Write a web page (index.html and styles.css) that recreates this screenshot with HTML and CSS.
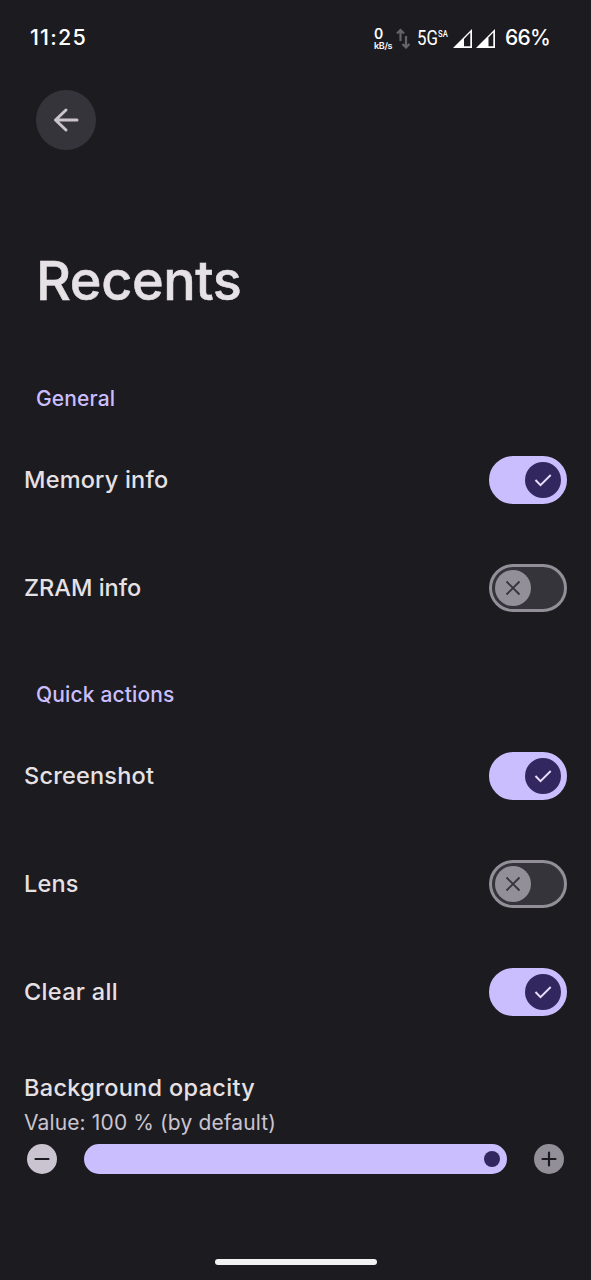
FILE: index.html
```html
<!DOCTYPE html>
<html lang="en">
<head>
<meta charset="utf-8">
<title>Recents</title>
<link rel="stylesheet" href="styles.css">
</head>
<body>
<svg class="defs" width="0" height="0">
  <symbol id="check" viewBox="0 0 36 36"><path d="M10.500 18l5 5.200L25.700 13" fill="none" stroke="#e9e0ff" stroke-width="1.900"/></symbol>
  <symbol id="cross" viewBox="0 0 36 36"><path d="M11.500 11.500l13 13M24.500 11.500l-13 13" fill="none" stroke="#36343b" stroke-width="1.900"/></symbol>
</svg>
<div class="screen">
  <header class="status">
    <span class="clock">11:25</span>
    <div class="indicators">
      <div class="speed"><span class="rate">0</span><span class="unit">kB/s</span></div>
      <svg class="arrows" width="14" height="21" viewBox="0 0 14 21"><path d="M4.500 13V2M1 5.500L4.500 2 8 5.500M10 8v11.500M6.500 16l3.500 3.500 3.500-3.500" fill="none" stroke="#66646a" stroke-width="2.200"/></svg>
      <span class="network">5G</span><span class="sa">SA</span>
      <svg class="signal" width="19" height="19" viewBox="0 0 19 19"><path d="M0 19L19 0v19z" fill="#fff"/><path d="M11 10l6.300-6.600V17.300H11z" fill="#1c1b1f"/></svg>
      <svg class="signal second" width="19" height="19" viewBox="0 0 19 19"><path d="M0 19L19 0v19z" fill="#fff"/><path d="M12.500 8.500l4.800-5.100V17.300h-4.800z" fill="#1c1b1f"/></svg>
      <span class="battery">66%</span>
    </div>
  </header>
  <button class="back" aria-label="Back"><svg width="60" height="60" viewBox="0 0 60 60"><path d="M41 30H20M30 20L19.500 30l10.500 10" fill="none" stroke="#cbc4cf" stroke-width="3" stroke-linecap="round" stroke-linejoin="round"/></svg></button>
  <h1 class="title">Recents</h1>
  <main>
    <h2 class="section">General</h2>
    <div class="row"><span class="label">Memory info</span><span class="switch on"><svg class="thumb"><use href="#check"/></svg></span></div>
    <div class="row"><span class="label caps">ZRAM info</span><span class="switch"><svg class="thumb"><use href="#cross"/></svg></span></div>
    <h2 class="section">Quick actions</h2>
    <div class="row"><span class="label">Screenshot</span><span class="switch on"><svg class="thumb"><use href="#check"/></svg></span></div>
    <div class="row"><span class="label">Lens</span><span class="switch"><svg class="thumb"><use href="#cross"/></svg></span></div>
    <div class="row"><span class="label wide">Clear all</span><span class="switch on"><svg class="thumb"><use href="#check"/></svg></span></div>
    <section class="opacity">
      <div class="label wide">Background opacity</div>
      <div class="value">Value: 100 % (by default)</div>
      <div class="slider">
        <svg class="step" width="30" height="30" viewBox="0 0 30 30"><circle cx="15" cy="15" r="15" fill="#cac4d0"/><path d="M8.500 15h13" stroke="#1c1b1f" stroke-width="2.200" stroke-linecap="round"/></svg>
        <div class="track"><span class="knob"></span></div>
        <svg class="step" width="30" height="30" viewBox="0 0 30 30"><circle cx="15" cy="15" r="15" fill="#938f99"/><path d="M8.500 15h13M15 8.500v13" stroke="#1c1b1f" stroke-width="2.200" stroke-linecap="round"/></svg>
      </div>
    </section>
  </main>
  <div class="home"></div>
</div>
</body>
</html>
```
FILE: styles.css
```css
* { box-sizing: border-box; }
body { margin: 0; background: #1c1b1f; font-family: Inter, Roboto, sans-serif; color: #e6e1e5; }
.defs { display: block; position: absolute; }
.screen { width: 591px; height: 1280px; display: flex; flex-direction: column; overflow: hidden; }
.status { height: 76px; padding: 0 43px 0 30px; display: flex; align-items: center; justify-content: space-between; flex: none; color: #fff; }
.clock { font-size: 21.5px; font-weight: 500; letter-spacing: 1.2px; margin-top: -2px; }
.indicators { display: flex; align-items: center; white-space: nowrap; }
.speed { width: 19px; margin-right: 3px; display: flex; flex-direction: column; }
.rate { font-size: 14px; line-height: 14px; font-weight: 600; }
.unit { font-size: 9px; line-height: 9px; font-weight: 600; letter-spacing: -0.3px; }
.arrows { margin-right: 7px; }
.network { font-family: Roboto, sans-serif; font-size: 20.5px; width: 20px; transform: scaleX(0.82); transform-origin: left; }
.sa { font-family: Roboto, sans-serif; font-size: 9px; font-weight: 500; width: 10px; margin: -9px 5px 0 1px; transform: scaleX(0.85); transform-origin: left; }
.second { margin: 0 10px 0 4px; }
.battery { font-size: 21px; font-weight: 500; width: 43px; letter-spacing: -0.7px; margin-top: -2px; }
.back { width: 60px; height: 60px; margin: 14px 0 0 36px; padding: 0; border: 0; border-radius: 50%; background: #36343b; flex: none; }
.back svg { display: block; }
.title { margin: 97px 0 0 36px; height: 99px; line-height: 68px; font-size: 54px; font-weight: 500; letter-spacing: -0.4px; -webkit-text-stroke: 0.5px; }
main { display: flex; flex-direction: column; }
.section { margin: 0; height: 80px; padding: 37px 36px 0; line-height: 32px; font-size: 21px; font-weight: 450; letter-spacing: 0.15px; color: #cabeff; }
.row { height: 108px; padding: 0 24px; display: flex; align-items: center; justify-content: space-between; }
.label { font-size: 23.5px; line-height: 32px; font-weight: 500; letter-spacing: 0.2px; white-space: nowrap; }
.caps { letter-spacing: 0; }
.wide { letter-spacing: 0.33px; }
.switch { width: 78px; height: 48px; border-radius: 24px; border: 3px solid #938f99; background: #36343b; padding: 3px; display: flex; }
.thumb { width: 36px; height: 36px; border-radius: 50%; background: #938f99; }
.on { background: #cabeff; border-color: #cabeff; justify-content: flex-end; }
.on .thumb { background: #32285f; }
.opacity { padding: 26px 24px 0; }
.value { font-size: 21px; line-height: 32px; margin-top: 3px; color: #cac4d0; letter-spacing: 0.13px; white-space: nowrap; }
.slider { display: flex; align-items: center; gap: 27px; padding: 0 3px; margin-top: 5px; }
.step { flex: none; }
.track { flex: 1; height: 30px; border-radius: 15px; background: #cabeff; display: flex; align-items: center; justify-content: flex-end; padding-right: 7px; }
.knob { width: 16px; height: 16px; border-radius: 50%; background: #32285f; }
.home { width: 162px; height: 6px; border-radius: 3px; background: #f2f2f2; margin: auto auto 15px 215px; }
```
